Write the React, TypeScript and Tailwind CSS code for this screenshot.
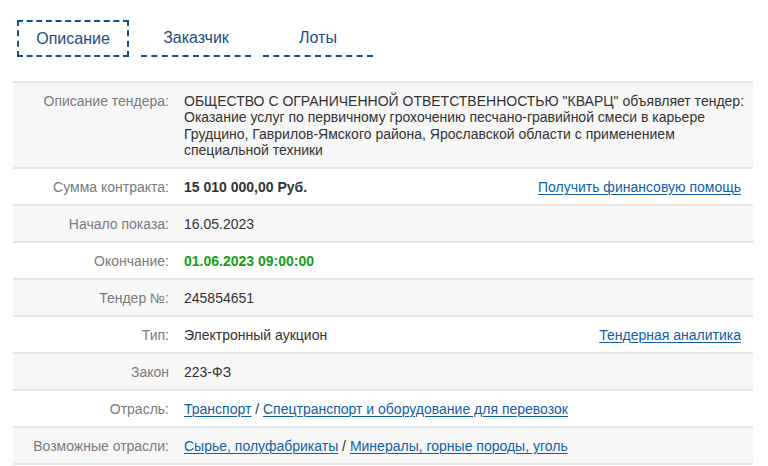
import type { ReactNode } from "react";

type Row = {
  label: string;
  value: ReactNode;
  aside?: string;
};

const linkCls = "text-[#1060a8] underline underline-offset-2 decoration-1";

const rows: Row[] = [
  {
    label: "Описание тендера:",
    value:
      'ОБЩЕСТВО С ОГРАНИЧЕННОЙ ОТВЕТСТВЕННОСТЬЮ "КВАРЦ" объявляет тендер: Оказание услуг по первичному грохочению песчано-гравийной смеси в карьере Грудцино, Гаврилов-Ямского района, Ярославской области с применением специальной техники',
  },
  {
    label: "Сумма контракта:",
    value: <span className="font-bold">15 010 000,00 Руб.</span>,
    aside: "Получить финансовую помощь",
  },
  { label: "Начало показа:", value: "16.05.2023" },
  {
    label: "Окончание:",
    value: <span className="font-bold text-[#13a013]">01.06.2023 09:00:00</span>,
  },
  { label: "Тендер №:", value: "245854651" },
  { label: "Тип:", value: "Электронный аукцион", aside: "Тендерная аналитика" },
  { label: "Закон", value: "223-ФЗ" },
  {
    label: "Отрасль:",
    value: (
      <>
        <a className={linkCls}>Транспорт</a> / <a className={linkCls}>Спецтранспорт и оборудование для перевозок</a>
      </>
    ),
  },
  {
    label: "Возможные отрасли:",
    value: (
      <>
        <a className={linkCls}>Сырье, полуфабрикаты</a> / <a className={linkCls}>Минералы, горные породы, уголь</a>
      </>
    ),
  },
];

const tabs = ["Описание", "Заказчик", "Лоты"];

export default function App() {
  return (
    <div className="h-[466px] w-[768px] overflow-hidden bg-white font-['Liberation_Sans',Arial,sans-serif]">
      {/* Tabs */}
      <div className="flex gap-3 pl-[17px] pt-[20px]">
        {tabs.map((tab, i) => (
          <div
            key={tab}
            className={
              i === 0
                ? "flex h-[37px] w-[112px] items-center justify-center border-2 border-dashed border-[#134f8c] pt-[1px] text-[16px] text-[#1b4d85]"
                : "flex h-[37px] w-[110px] items-center justify-center border-b-2 border-dashed border-[#134f8c] pt-[1px] text-[16px] text-[#1b4d85]"
            }
          >
            {tab}
          </div>
        ))}
      </div>

      {/* Details table */}
      <div className="ml-[13px] mt-[24px] w-[740px] border-t-2 border-[#e6e6e6] text-[14px] leading-[16.3px]">
        {rows.map((row, i) => (
          <div
            key={row.label}
            className={`flex border-b-2 border-[#e6e6e6] pt-[10px] pb-[8.7px] ${i % 2 === 0 ? "bg-[#f7f7f7]" : "bg-white"}`}
          >
            <div className="w-[156px] shrink-0 text-right text-[#7a7a7a]">{row.label}</div>
            <div className="flex flex-1 justify-between pl-[15px] pr-[4px] text-[#333]">
              <div>{row.value}</div>
              {row.aside && <a className={`${linkCls} mr-[8px] shrink-0`}>{row.aside}</a>}
            </div>
          </div>
        ))}
      </div>
    </div>
  );
}
